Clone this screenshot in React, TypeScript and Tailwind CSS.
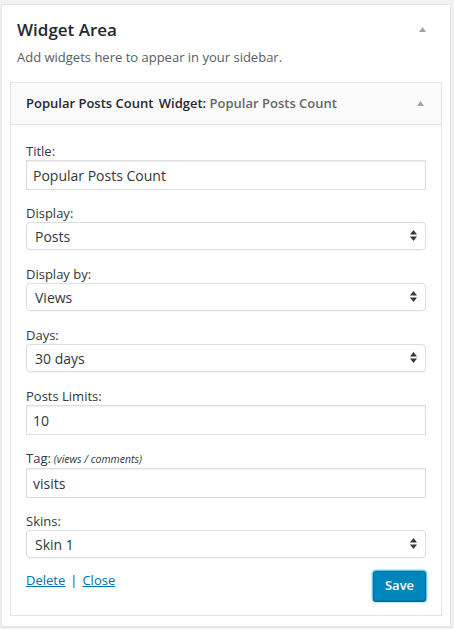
import { useState } from 'react'

const fields = [
  { label: 'Title:', type: 'input', value: 'Popular Posts Count' },
  { label: 'Display:', type: 'select', value: 'Posts' },
  { label: 'Display by:', type: 'select', value: 'Views' },
  { label: 'Days:', type: 'select', value: '30 days' },
  { label: 'Posts Limits:', type: 'input', value: '10' },
  { label: 'Tag:', hint: '(views / comments)', type: 'input', value: 'visits' },
  { label: 'Skins:', type: 'select', value: 'Skin 1' },
]

function Arrow() {
  return (
    <svg width="7" height="5" viewBox="0 0 7 5" className="fill-[#a0a5aa]">
      <path d="M3.5 0 L7 5 L0 5 Z" />
    </svg>
  )
}

function SelectArrows() {
  return (
    <svg width="7" height="11" viewBox="0 0 7 11" className="fill-[#32373c]">
      <path d="M3.5 0 L7 4.5 L0 4.5 Z" />
      <path d="M0 6.5 L7 6.5 L3.5 11 Z" />
    </svg>
  )
}

export default function App() {
  const [open] = useState(true)

  return (
    <div className="min-h-screen bg-[#f1f1f1] font-['Open_Sans',sans-serif] text-[#23282d] pt-[4px] pl-[1px]">
      {/* Sidebar panel */}
      <div className="w-[450px] bg-white border border-[#e5e5e5] shadow-[0_1px_1px_rgba(0,0,0,0.04)] pt-[13px] px-[8px] pb-[10px]">
        <div className="flex items-center justify-between pl-[7px]">
          <h2 className="text-[17px] leading-[23px] font-semibold">Widget Area</h2>
          <span className="mr-[16px]">
            <Arrow />
          </span>
        </div>
        <p className="mt-[7px] pl-[7px] text-[13px] leading-[18px] text-[#555d66]">
          Add widgets here to appear in your sidebar.
        </p>

        {/* Widget */}
        <div className="mt-[16px] border border-[#e5e5e5] bg-white">
          <div className="h-[42px] flex items-center justify-between pl-[15px] bg-[#fafafa] border-b border-[#e5e5e5]">
            <div className="text-[13px] font-semibold">
              Popular Posts Count <span className="ml-[2px]">Widget:</span>{' '}
              <span className="text-[#666]">Popular Posts Count</span>
            </div>
            <span className="mr-[17px]">
              <Arrow />
            </span>
          </div>

          {open && (
            <div className="px-[15px] pt-[17px] pb-[14px]">
              <div className="flex flex-col gap-[14px]">
                {fields.map((f) => (
                  <div key={f.label}>
                    <label className="block text-[13px] leading-[18px] text-[#32373c]">
                      {f.label}
                      {f.hint && <i className="ml-[3px] text-[10.5px]">{f.hint}</i>}
                    </label>
                    {f.type === 'input' ? (
                      <input
                        defaultValue={f.value}
                        className="block w-[400px] h-[30px] px-[6px] border border-[#ddd] shadow-[inset_0_1px_2px_rgba(0,0,0,0.07)] text-[14px] text-[#32373c] outline-none"
                      />
                    ) : (
                      <div className="relative mb-[1px]">
                        <select
                          defaultValue={f.value}
                          className="block w-[400px] h-[28px] pl-[8px] appearance-none bg-white border border-[#ddd] rounded-[4px] shadow-[0_1px_1px_rgba(0,0,0,0.04)] text-[14px] text-[#32373c] outline-none"
                        >
                          <option>{f.value}</option>
                        </select>
                        <span className="absolute right-[9px] top-[8px] pointer-events-none">
                          <SelectArrows />
                        </span>
                      </div>
                    )}
                  </div>
                ))}
              </div>

              <div className="mt-[12px] flex items-start justify-between">
                <div className="text-[13px] leading-[18px] text-[#0073aa]">
                  <a href="#" className="underline">Delete</a>
                  <span className="text-[#32373c] mx-[5px]">|</span>
                  <a href="#" className="underline">Close</a>
                </div>
                <button className="w-[53px] h-[30px] rounded-[3px] bg-[#0085ba] border border-[#0073aa] shadow-[0_1px_0_#006799,0_0_2px_1px_#33b3db] text-white text-[13px] font-semibold">
                  Save
                </button>
              </div>
            </div>
          )}
        </div>
      </div>
    </div>
  )
}
